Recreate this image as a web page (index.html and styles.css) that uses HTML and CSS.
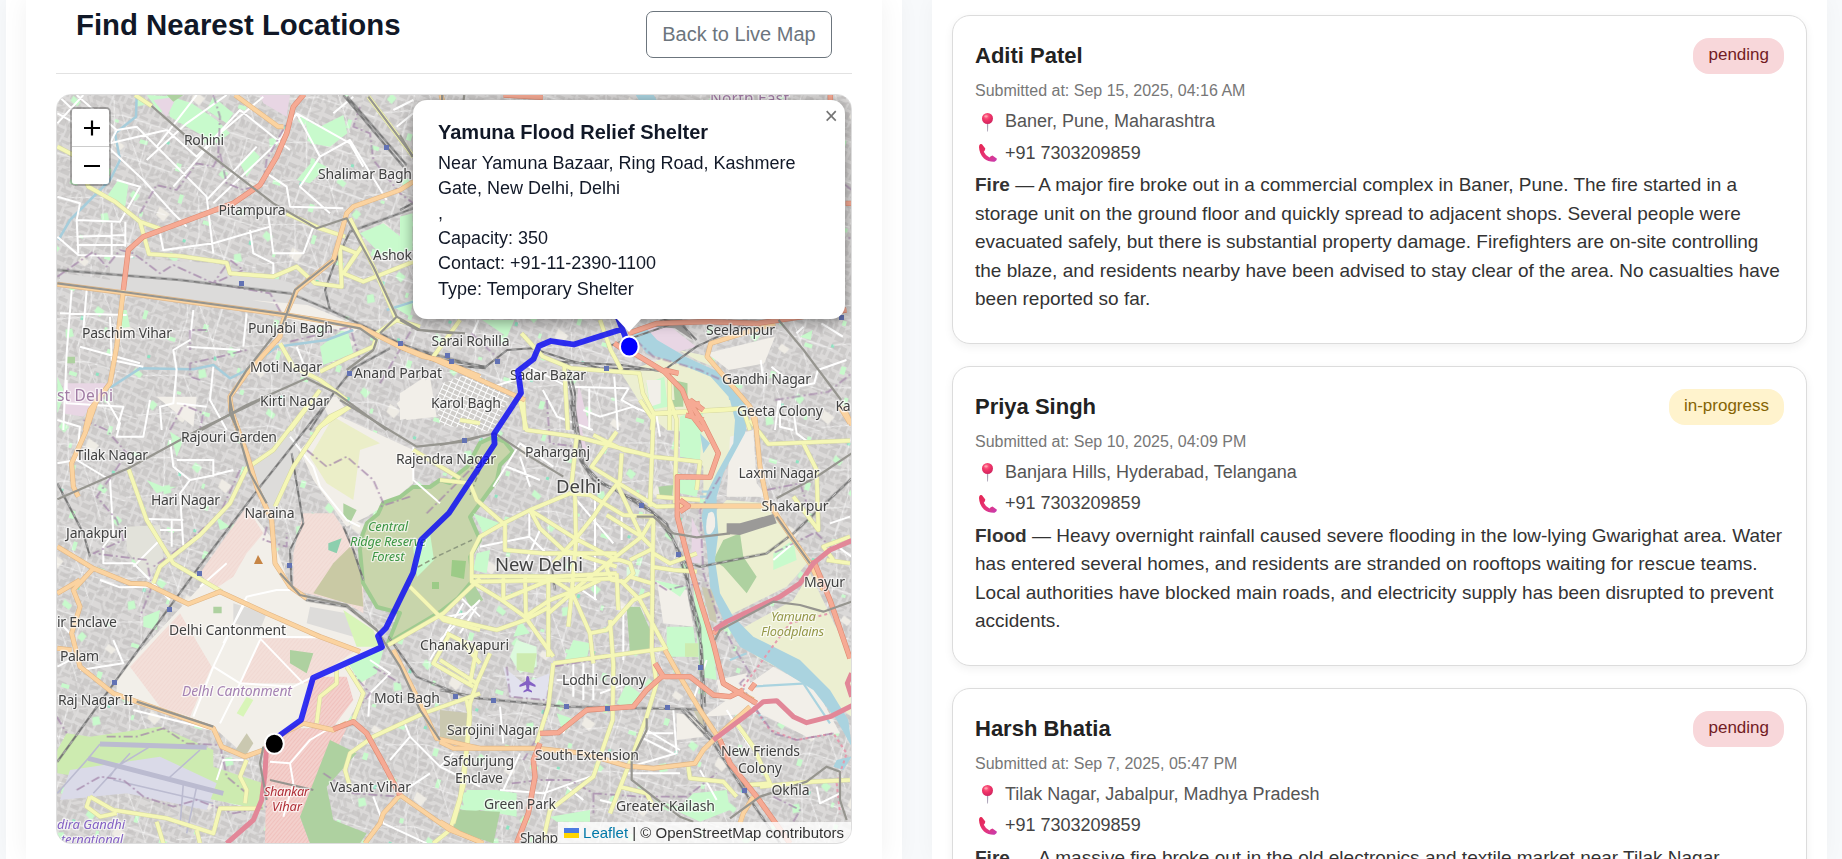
FILE: index.html
```html
<!DOCTYPE html>
<html lang="en">
<head>
<meta charset="utf-8">
<title>Find Nearest Locations</title>
<link rel="stylesheet" href="styles.css">
</head>
<body>
<div class="page">
<section class="panel map-panel">
<div class="map-card">
<header class="map-head"><h2>Find Nearest Locations</h2><button class="back">Back to Live Map</button></header>
<div class="map">
<svg class="tiles" viewBox="57 95 794 748" width="794" height="748">
<defs>
<pattern id="blocks" width="31" height="27" patternUnits="userSpaceOnUse" patternTransform="rotate(24)">
<path fill="#c6c5c4" d="M1 2h8v5h-8zM11 1h6v7h-6zM20 3h9v4h-9zM2 10h5v7h-5zM9 11h10v4h-10zM21 10h4v8h-4zM27 10h3v6h-3zM1 20h9v5h-9zM12 18h6v7h-6zM20 21h9v3h-9z"/>
<path stroke="#e6e6e6" stroke-width=".6" fill="none" d="M0 9H31M19.500 0V27"/>
</pattern>
<pattern id="blocks2" width="43" height="37" patternUnits="userSpaceOnUse" patternTransform="rotate(-13)">
<path fill="#b9b8b6" opacity=".5" d="M3 3h12v2h-12zM3 7h9v3h-9zM20 2h2v12h-2zM25 4h3v9h-3zM32 6h8v2h-8zM5 16h2v13h-2zM10 18h3v8h-3zM18 19h15v2h-15zM18 24h11v3h-11zM36 18h3v14h-3zM16 31h14v2h-14z"/>
</pattern>
<pattern id="lanes" width="97" height="83" patternUnits="userSpaceOnUse" patternTransform="rotate(8)">
<path stroke="#fff" stroke-width="1" fill="none" opacity=".6" d="M0 20L40 14L97 24M30 0L36 40L28 83M70 20L64 60L74 83M0 60L36 52L97 64M40 14L64 60"/>
</pattern>
<pattern id="parks" width="139" height="121" patternUnits="userSpaceOnUse" patternTransform="rotate(17)">
<path fill="#c8facc" d="M12 8h5v7h-5zM44 22l8 3-3 7-7-4zM90 12h4v9h-4zM120 30h8v4h-8zM20 54l6-3 4 7-7 4zM66 60h4v5h-4zM98 70l9 4-2 5-8-3zM36 92h8v4h-8zM78 104h5v8h-5zM124 96l6 3-3 7-6-3zM57 40h3v5h-3zM6 80h4v3h-4z"/>
<path fill="#8fe3c2" d="M31 36h3v4h-3zM106 54h3v3h-3zM62 86h3v3h-3z"/><path fill="#efece5" d="M74 30l12 4-4 9-9-4zM14 100l9 3-3 6-8-3z"/>
</pattern>
<pattern id="stripes" width="9" height="9" patternUnits="userSpaceOnUse" patternTransform="rotate(40)"><path fill="#f3dfd9" d="M0 0h9v9H0z"/><path fill="#efcfc9" d="M0 0h1v9H0z"/></pattern>
<pattern id="stripes2" width="9" height="9" patternUnits="userSpaceOnUse" patternTransform="rotate(40)"><path fill="#f3d0cc" d="M0 0h9v9H0z"/><path fill="#edb2ae" d="M0 0h1.500v9H0z"/></pattern>
<pattern id="bazar" width="6" height="5" patternUnits="userSpaceOnUse" patternTransform="rotate(25)"><path fill="#cfcdca" d="M0 0h6v5H0z"/><path stroke="#fff" stroke-width="2" d="M0 0H6M0 0V5"/></pattern>
<g id="yellow">
<g transform="scale(.33333)"><path d="M172 440L230 470L265 560L345 605L420 665L490 690M420 665L447 762L540 768L680 788L690 820L820 830L890 800L945 850L1025 860L1020 740L1070 760L1030 820L1090 845L1240 785M1085 740L1030 820M405 285L455 318M860 640L960 685L1035 710M840 1030L880 1100L960 1140L1040 1200M960 1115L1040 1075L1120 1040L1130 1010M1050 655L1120 800L1190 960L1130 1000M1190 960L1260 980M870 1290L960 1170M950 1290L990 1250L1050 1220M1105 290L1240 470M1300 1070L1380 960"/></g>
<g transform="translate(400) scale(.35714 .33333)"><path d="M340 1000L400 1070L480 1105L670 1120L680 1180L710 1240L960 1225M755 1130V1290M460 1100L470 1290M345 1200L350 1290M560 960L590 1050L620 1110M710 1240L705 1290M960 1225L980 1290"/></g>
<g transform="translate(0 400) scale(.33333)"><path d="M385 205L440 360L520 490L640 560L665 575M460 550L480 500L600 405L690 310L740 205L820 150L920 20M825 320L880 200L960 80L1050 20M1240 150L1380 235M1380 60L1440 70M1230 560L1330 660L1440 690M1440 535L1330 640L1165 735M1010 810L1010 850L960 890L950 970M1040 800L1090 880L1060 960M1440 880L1270 940L1120 1010L1050 1060L1035 1110L1050 1160M1400 900L1410 950L1390 1160L1350 1290L1300 1330M270 1190L340 1230L500 1255L640 1300L660 1225L780 1225M270 1190L260 1220L300 1250L350 1240M470 1265L490 1330M740 1080L720 1130L740 1170L735 1210M590 1290L600 1330M1350 700L1300 790L1420 860M1380 720L1440 790"/></g>
<g transform="translate(440 400) scale(.33333)"><path d="M600 0L640 60L630 320M690 0L710 60L705 310M640 42L880 28M240 0L260 90L410 110L640 170L780 185L770 270M460 105L550 150L600 160M530 95L455 200L650 320L705 318M545 160L540 240L490 305M930 60L985 132L1230 122M1090 130L1130 210L1135 390L1060 290M1230 410L1150 440L1180 480M0 240L90 250L110 300L190 370M410 110L395 250L405 290M190 370L270 330L390 280L450 285L550 345L640 350M190 370L120 410L95 460V545L185 600L255 650L340 770M95 528L340 530L530 520M195 370V450L310 460L530 460M405 290L408 420L395 580L385 680M270 330L405 415L530 480M530 250L605 410L635 440M640 350L605 410L500 345M640 350L635 750M340 490L400 425L460 350L490 305M270 330L300 385L370 450L530 500M255 650L330 600L395 575L540 460L605 410M95 545L400 540L530 535M255 530L258 650M190 600V530M185 600L330 540M395 575L325 530L325 770M395 575L450 700L500 690L580 600L630 580M330 620L255 660L170 690L0 650M540 540L600 600L680 750M570 530L635 550M570 480L640 445M530 520L535 630M325 640L395 580L480 540M450 700L460 790M340 790L680 745M510 660L520 790L518 960L460 1130L330 1230L310 1320M635 750L650 850L620 950L580 1060L510 1240M340 790L325 920L290 1030M0 780L110 850L150 760M110 850L90 910L80 1040L60 1200L40 1270M20 700L110 745L90 850M650 290L780 300M635 500L700 510L770 515M640 460L690 490L770 460M890 970L940 1040L990 1150L915 1155M745 1100L750 1135L850 1145L890 1190M540 1160L620 1180L640 1220M960 1160L1120 1145L1230 1140M1160 480L1230 490"/><path d="M540 480L570 490L580 520L555 545L515 540L500 505L515 480Z"/></g>
</g>
<g id="orange">
<g transform="scale(.33333)"><path d="M705 285L835 380L850 380M1240 545L1200 570L1060 620L1040 640L1000 780L890 870L850 960L840 1010L740 1120L690 1190L692 1230L715 1292M370 870L350 1040L330 1150L270 1230L255 1292M172 853L370 878L600 910L860 945L1080 980L1200 1040L1270 1070L1320 1080L1440 1130"/></g>
<g transform="translate(400) scale(.35714 .33333)"><path d="M0 1040L100 1080L350 1200M1050 970L870 1030L860 1070L900 1120L980 1220L1000 1292M1240 1220L1265 1275M115 285L120 305"/></g>
<g transform="translate(0 400) scale(.33333)"><path d="M290 0L255 100L215 190L220 260L235 290M690 0L700 50L740 160L770 260L815 360L825 490L870 560L920 595M172 440L280 505L390 550L440 552L565 612L660 575L800 640L960 710L1080 755M280 505L220 570L240 620L215 700L240 800L340 880L410 905L640 985L665 1040L735 1070L790 1050L830 1010L910 970L1000 990L1040 970M172 580L240 540M172 745L215 750M1180 750L1260 910L1310 1015L1440 1045M1200 1185L1150 1240L1140 1270L1095 1330M1200 1185L1350 1290L1440 1325"/></g>
<g transform="translate(440 400) scale(.33333)"><path d="M945 50L960 200L980 300L1040 390L1110 490L1150 570M720 318L970 318M0 1025L40 1045L290 1045L430 1060L500 1080L560 1098L640 1105L765 1090L790 1050L830 1010L930 920M675 750L720 830L780 930L840 1020M850 850L940 900M0 1265L60 1300L130 1330M940 1190L910 1240L900 1270M1230 70L1200 20"/></g>
</g>
<g id="salmon">
<g transform="scale(.33333)"><path d="M912 283L880 320L860 400L830 470L780 555L700 610L430 710L385 750L370 870"/></g>
<g transform="translate(400) scale(.35714 .33333)"><path d="M290 285L400 292M640 1050L740 1115L790 1170L820 1250L850 1292M640 1000L720 970L860 965L1000 970L1250 930M1248 610H1265M1205 285V300M640 1060L600 1030M740 1110L780 1120M810 1220L840 1210M800 1245L850 1260"/></g>
<g transform="translate(0 400) scale(.33333)"><path d="M1000 988L1060 965L1100 1000L1150 1090L1200 1185"/></g>
<g transform="translate(440 400) scale(.33333)"><path d="M745 0L790 70L835 160L810 232L712 230L712 350L740 460L780 600L820 730L850 850L950 910M300 1000L355 998L440 930L580 920L620 870L665 830L750 830L820 885L870 890L910 870M720 300L745 318L720 335M300 1030L280 1080L285 1130L265 1240L230 1330M840 1020L870 1090L950 1190L1050 1330M1120 480L1170 600L1230 775M820 700L860 670M930 870L945 850M645 790L670 830M750 0L790 30"/></g>
</g>
<g id="pink">
<g transform="translate(0 400) scale(.33333)"><path d="M800 1030L795 1120L785 1200L760 1260L680 1330"/></g>
<g transform="translate(440 400) scale(.33333)"><path d="M822 690L860 665L1020 590L1080 550L1120 490L1170 450L1235 422M820 1020L940 930L970 905L1010 902L1060 950L1100 968L1170 950L1240 915M1235 820L1222 850L1235 890"/></g>
</g>
<g id="metro">
<g transform="scale(.33333)"><path d="M455 318L560 410L820 610L950 685L1040 655L1120 800L1190 950L1260 990L1395 1000M1190 950L1140 1000M1000 780L885 870L850 970L740 1110L690 1190L690 1240L715 1292M172 850L370 876L860 943L1080 985L1130 1020L1120 1050L1040 1110M605 1290L740 1215L920 1135L1010 1180L1160 1290M1105 290L1240 470"/></g>
<g transform="translate(400) scale(.35714 .33333)"><path d="M1060 960L1130 1050L1235 1200M0 960L50 990L150 1000M0 405L35 470M180 285L178 300M118 285V300"/></g>
<g transform="translate(0 400) scale(.33333)"><path d="M690 0L700 50L750 220L800 310M172 298L385 205L605 85L740 20L780 0M1020 0L1250 140L1390 125L1440 110M840 520L900 585L1040 615L1130 690L1200 800L1260 930L1320 1020M410 905L640 980M790 1040L780 1090L800 1200M810 1140L940 1170"/></g>
<g transform="translate(440 400) scale(.33333)"><path d="M0 135L165 100L270 170L370 230M590 350L640 350L700 400L770 412L870 400M1235 160L1130 230L1010 295M1010 350L1110 490M620 955L620 990L575 1080L575 1140L640 1190L720 1250L760 1265M825 720L840 690L1000 605L1080 615L1150 635L1235 605M870 1255L960 1190L1100 1145L1160 1100L1200 1115L1200 1200L1220 1260"/></g>
</g>
<g id="rail">
<g transform="scale(.33333)"><path d="M172 810L540 840L870 880L990 930L1140 1000L1220 1040L1440 1100M1030 285L1210 500M1042 290L1220 495M1240 625L1050 695L1000 800L975 870L990 930M1170 1045L1060 1105L1000 1180L930 1290"/></g>
<g transform="translate(400) scale(.35714 .33333)"><path d="M0 1030L120 1080L240 1100L300 1050L370 1045L470 1080L560 1105L740 1110L830 1040L970 970L1060 960M0 1045L130 1095L240 1105M440 1085L620 1095L740 1115M460 1090L480 1180L490 1290M470 1090L490 1180L485 1290M580 1040L780 965L830 1020M640 1000L740 960L780 970M0 630L35 610"/></g>
<g transform="translate(0 400) scale(.33333)"><path d="M970 20L780 260L590 510L345 845L172 1085M875 160L910 370L870 450L875 560L920 600L1040 620L1130 690M1090 540L1060 450L1030 380M172 250L250 400L270 470M1165 710L1250 830L1370 880L1440 895"/></g>
<g transform="translate(440 400) scale(.33333)"><path d="M390 0L420 180L460 240L600 305L680 370L715 460L740 540L780 680L785 920L800 1000M400 0L430 190L475 240L640 340L700 420L740 500L750 600L785 740L795 920M720 480L780 500L980 460L1060 400L1235 235M0 870L120 895L380 920L790 928M725 930L820 1030L910 1170L1020 1330M735 925L830 1025L920 1170M345 570L335 500"/></g>
</g>
</defs>
<path fill="#dddcdb" d="M57 95H851V843H57z"/><path fill="url(#blocks)" d="M57 95H851V843H57z"/><path fill="url(#blocks2)" d="M57 95H851V843H57z"/><path class="haze" d="M57 95H851V843H57z"/><path fill="url(#parks)" d="M57 95H851V843H57z"/><path fill="url(#lanes)" d="M57 95H851V843H57z"/>
<g transform="scale(.33333)">
<path fill="#c8facc" d="M500 285L575 310L650 360L690 400L650 430L560 380L510 350ZM640 290L700 340L680 370L620 330ZM915 360L960 380L1030 345L1042 400L990 440L930 430ZM320 590L355 540L385 555L375 625ZM440 285L530 290L480 340ZM720 490L760 450L780 470L740 530ZM890 540L940 480L980 500L930 550ZM1080 700L1150 670L1240 740L1150 770ZM960 1040L1040 980L1060 1060L970 1095ZM172 1130L195 1180L172 1240ZM360 930L380 930L390 980L360 985ZM1240 900L1180 920L1230 950Z"/>
<path fill="#e8d6e4" d="M780 285H870L860 350L790 310ZM460 300L530 290L500 350ZM190 1150H320L250 1250L190 1240ZM580 830L700 830L640 880Z"/>
<path fill="#f2efe9" d="M440 840L860 890L960 930L1080 980L1060 1000L700 920L450 890ZM1190 1210L1290 1130L1310 1250L1220 1260ZM960 1190L1010 1190L1040 1230L990 1260ZM470 1190L590 1190L580 1280Z"/>
<path fill="#dcdbda" d="M330 770L640 790L880 850L980 920L640 890L330 850ZM180 818L820 910L850 940L180 855Z"/><path fill="#aed1a0" d="M500 285H550L520 305ZM200 1070h25v20h-25Z"/>
</g>
<g transform="translate(400) scale(.35714 .33333)">
<path fill="#ecefd1" d="M620 1120L780 1060L860 1100L930 1180L940 1292H750L690 1240ZM780 1050L870 1070L900 1110L830 1080Z"/>
<path fill="#c8facc" d="M690 1150L740 1130L750 1220L700 1230ZM1120 1010L1155 990L1150 1020ZM230 960L320 960L300 1010ZM770 1270L820 1250V1292H770ZM0 650L35 640V750L0 760Z"/><path fill="#aed1a0" d="M765 1140L805 1150V1220H770Z"/>
<path fill="#f2efe9" d="M690 1140H730V1210L700 1220ZM860 1060L1050 1010L1020 1090L920 1110ZM0 1180L70 1130L90 1240L0 1260Z"/><path fill="#e8d6e4" d="M660 985L740 965L830 1040L760 1060ZM500 1150L530 1280H490Z"/><path fill="#9b9a98" d="M700 980L740 958H790L820 1020L770 985Z"/>
<path class="water" d="M640 985L690 1060L790 1095L870 1130L920 1190L935 1292H970L955 1200L900 1120L800 1070L720 1020L690 985ZM660 285H710L720 302H670Z"/>
</g>
<g transform="translate(0 400) scale(.33333)">
<path fill="#f2efe9" d="M1000 40L1240 150L1240 250L1180 300L1100 350L1040 380L940 240L900 150ZM740 320L820 420L870 560L920 600L1040 620L1140 700L1080 900L1040 970L880 990L740 1070L650 990L350 880L350 830L600 560ZM750 830H930L900 980H760Z"/>
<path fill="#ebeec8" d="M1000 50L1140 130L1080 150L1060 300L980 250L930 170Z"/>
<path fill="#dddcda" d="M740 200L880 90L900 180L820 330L760 250ZM930 620L1040 640L1060 710L920 670ZM700 610L800 640L780 690L700 670Z"/>
<path fill="url(#stripes)" d="M390 800L540 640L635 800L570 950L480 920ZM600 520L740 320L790 400L740 460L700 530L640 570ZM910 340L1000 340L1060 430L1090 560L1090 640L1040 610L880 570L880 460ZM720 850L780 715L950 715L1070 750L920 850Z"/>
<path fill="url(#stripes2)" d="M870 985L1040 985L980 1110L900 1250L930 1330H795L800 1060ZM930 830L1040 830L1060 900L1000 980L910 970Z"/>
<path fill="#c9c9a4" d="M1050 440L1080 490L1090 620L1040 610L940 580L1000 490Z"/>
<path fill="#aed1a0" d="M1030 310L1070 330L1050 370L1030 350ZM870 750L940 760L920 820L870 790ZM990 1020L1070 1060L980 1160L1000 1260L1100 1300L1080 1330H930L900 1250ZM1370 1240L1440 1230V1290L1360 1290ZM640 620h25v20h-25Z"/>
<path fill="#8ccfae" d="M985 430L1025 415L1010 460L985 450ZM1120 470h6v30h-6Z"/><path fill="#c8facc" d="M1040 780L1150 750L1130 820L1080 850ZM430 650L480 630L470 690L430 680ZM510 95L550 120L530 170ZM650 350L690 380L660 390ZM440 240L490 260H530L470 280ZM1380 1180L1440 1170V1230L1400 1240Z"/><path fill="#d8f5b8" d="M1030 630L1120 690L1140 740L1070 740ZM740 890L760 900L730 950L710 940Z"/>
<path fill="#cdebb0" d="M200 1000L270 1010L480 980L640 1050L640 1100L790 1150V1230L500 1170L172 1120V1050Z"/>
<path fill="#dadae8" d="M210 1110L480 1070L650 1150L620 1230L380 1180L180 1200Z"/><path class="runway" d="M300 1032L620 1042M265 1075L670 1180"/><path class="taxiway" d="M172 1180L265 1075L300 1032M350 1100L330 1130M450 1040L350 1100M600 1050L500 1140M590 1160L560 1300M390 1060L280 1180M550 1150L540 1280M340 1140L640 1210"/>
<path fill="#e2e2da" d="M380 380L480 375L490 480L440 530L380 450Z"/><path fill="#cac8b0" d="M740 1000L760 1030L735 1070L700 1060Z"/>
</g>
<path class="ridge" d="M480 443L467 467L458 474L450 483L440 480L430 487L413 487L400 497L383 503L378 514L367 523L362 536L360 550L363 583L377 607L400 613L388 643L440 612L458 598L473 580L470 557L480 540L470 517L484 498L497 480L500 465L513 452L505 442L493 437Z"/>
<path fill="#9ccb87" d="M452 560L466 561L464 579L451 576ZM432 582h7v7h-7z"/><path fill="#c8facc" d="M413 547L430 533L434 560L417 577Z"/>
<path class="trail" d="M418 567L440 555L472 540M480 470L470 495"/>
<g transform="translate(440 400) scale(.33333)">
<path fill="#ecefd1" d="M710 0H880L900 100L840 240L790 300L790 200L720 100ZM830 330L860 300L980 310L1000 350L1110 480L1040 560L860 650L810 500ZM880 700L1060 600L1110 520L1235 780V950L1120 860L950 770Z"/>
<path fill="#f2efe9" d="M870 110L940 90L950 250L980 290L860 290ZM650 540L740 570L760 680L670 670ZM790 950L1000 800L1130 870L1200 1000L1100 1010L960 940ZM830 840L920 820L960 920L840 900ZM710 940L790 950V1010L710 1020Z"/>
<path fill="#c8facc" d="M720 50L790 20L780 180L720 170ZM720 240H780L770 290L720 280ZM640 540L740 560L720 590L690 570ZM760 560L820 740L830 840L780 830ZM680 680L760 680L770 770L680 770ZM100 340L180 370L130 400ZM110 460L150 450L140 520L100 510ZM1000 460L1060 420L1070 480L1000 510ZM560 850L600 880L570 930L530 910ZM240 660L270 700L220 710ZM400 720L450 730L440 780L370 790ZM170 1170L230 1180L230 1250L70 1220L80 1170ZM330 1250L450 1230L450 1265L350 1265ZM640 1200L720 1220L760 1180L860 1170L870 1230L780 1265ZM350 940L410 960L370 1000Z"/>
<path fill="#dcfadd" d="M230 720L290 740L290 800L240 820L210 770ZM560 500L600 510L590 540L560 530Z"/><path fill="#cdebb0" d="M735 730H775V770H735ZM230 760H290L280 820L230 810Z"/>
<path fill="#aed1a0" d="M560 620L600 620L635 700V750L570 760ZM850 420L900 400L910 470L950 530L920 580L850 500L820 480ZM70 580L100 550L130 600L90 620ZM60 1230L180 1235L160 1330L40 1290ZM655 260L700 255L695 295L660 290ZM690 0H730V20H700Z"/>
<path fill="#e8d6e4" d="M755 350L790 430L780 490L755 490ZM410 0L430 110L450 180L420 130Z"/><path fill="#cac8b0" d="M0 930L90 940L90 1030L0 1030ZM785 560L820 570L830 670L810 660ZM760 930L790 940V990Z"/><path fill="#e2e2ee" d="M190 800L250 850L330 820L320 900L210 890Z"/>
<path class="water" d="M870 0H925L915 100L850 220L830 290L830 340L835 400L825 480L840 580L880 650L940 710L1080 780L1170 870L1225 960L1235 1040L1190 960L1120 870L990 790L900 740L850 660L810 560L800 440L785 350L800 280L830 220L880 130L885 60ZM780 100L810 130L790 160ZM1190 1080L1235 1070L1210 1110L1180 1100Z"/>
<path class="creek" d="M930 860L1100 850M1090 850L1170 970M870 780L920 760M940 920L970 960M780 290h25M785 275h20"/><path fill="#f2efe9" d="M805 340Q828 320 825 380Q815 410 800 400Q795 370 805 340Z"/>
<path class="planned" d="M910 860L990 750L1050 670L1170 640M940 920L990 990L1070 1020L1180 1000L1220 1060L1190 1150L1200 1240"/>
<path fill="#9b9a98" d="M860 370L900 370L1000 342L1010 370L900 405L860 402Z"/>
</g>
<path fill="url(#bazar)" d="M443 383L475 371L510 396L492 432L440 425L436 400Z"/>
<g class="stream">
<g transform="scale(.33333)"><path d="M410 290L408 350L345 400L360 480L330 540L210 660L175 720M320 1170L420 1105L580 1108L640 1095L690 1135L740 1110L830 1040L980 1020L1060 990M1160 930L1240 905"/></g>
</g>
<g class="street">
<g transform="scale(.33333)"><path d="M172 370L250 285M172 340L280 400L430 540L520 640L560 680M230 285L350 390L330 430L500 390M350 390L410 380L470 440L620 590L640 760M470 440L590 285M440 480L560 370L680 285M500 390L590 470L720 330L870 450M520 560L660 400L790 290M620 600L770 440M640 610L830 430L890 340L1050 430L1090 500M890 340L960 470L900 560L990 640M960 470L1050 420L1160 600M800 520L860 560L870 620L1030 625M172 590L240 610L230 660L360 665L420 560L350 540M230 660L235 760M335 665V765M376 665V740M230 710L376 705M230 735H376M480 700L490 750L640 730L810 680L800 620M750 690L760 760L820 790V830M810 680L820 760L910 760L940 680M172 710L235 765L400 770M180 940L380 945M215 870L200 1060L190 1290M260 870L250 990M330 950L335 1080L430 1100M240 1040L420 1090M580 930L570 1020L520 1050L530 1110L520 1210L480 1220L485 1290M560 1040L720 1050M640 1100L630 1200L680 1290M740 940L730 1040M530 1210L620 1220M890 1040L910 1090M200 1140L200 1210L370 1220L350 1290M1060 290L1000 340M1180 330L1240 300M1240 340L1190 380M172 285L220 330"/></g>
<g transform="translate(400) scale(.35714 .33333)"><path d="M360 1100L470 1160L640 1165M400 1170L440 1250L540 1290M530 1160L530 1290M600 1130L610 1290M640 1165L620 1200L670 1230M1040 1100L1110 1160L1160 1150L1170 1110L1250 1080M1010 1080L1020 1160M1130 980L1110 1000M1180 970L1240 1010M200 1010L220 960M260 1160L380 1120M1060 1200L1050 1290"/></g>
<g transform="translate(0 400) scale(.33333)"><path d="M172 60L240 80L230 180L330 240L340 400L310 440V490L400 490M172 190L230 180M320 0L360 70L350 110L430 110L450 0M510 120L520 200L570 240L540 280L550 440M570 240L620 230L700 210M530 180L640 180V230M440 357L550 360M480 390H550M515 360V440M480 420L400 500M870 110L940 200L960 260L1040 360L1080 380M1240 140L1240 240L1320 310M580 950L640 800L740 590L830 570L870 570M640 800L720 850L880 860L960 820M720 850L660 970M780 715L910 850M770 710L960 712M720 850L780 720M670 730L740 600M400 490L510 600M172 660L210 700M172 800L210 780M240 810L370 790L340 720M400 930L640 990M650 1140L670 1080L730 1080M980 990L930 1020L870 1090L880 1150L850 1250M1110 780L1170 820L1110 880L1105 950M1210 960L1230 1010L1320 1100L1440 1160M1170 1080L1230 1010M1290 1120L1200 1180M1120 1190L1150 1270L1280 1330M1320 1100L1360 1060M600 560L680 490M300 540L360 562L450 560M810 1085L870 1090M1440 600L1320 720M1380 590L1440 650M1290 780L1390 610"/></g>
<g transform="translate(440 400) scale(.33333)"><path d="M160 260L240 130L340 200M240 170L270 260M200 200L300 240M430 30L480 50L580 20M580 20L650 50L660 110M268 330V410L330 470M268 410L120 440M410 300L520 430M545 345V420M330 470L325 530M365 530L470 600M465 290V600M550 640V780M20 650L80 640M110 620L60 700M400 790V890M430 790V900M460 790V900M350 840H450M480 880L560 850M180 920L190 1030M370 1000L380 970M600 1010L700 1060M620 990L720 1050M700 930L710 1060L570 1100M610 1000L700 1000M560 1120L720 1120M240 1060L190 1170M330 1140L300 1230M380 1160L430 1200M180 1170L310 1180L450 1130M480 1200L560 1220M780 1110L830 1200M1170 370L1230 350M1060 30L1070 100L1110 130M1020 0V80L1060 90M1180 430L1235 470M1060 430L1000 480M1130 1160L1140 1210L1200 1180M860 930L930 1040M300 390L260 480M800 780L760 900"/></g>
</g>
<g class="border">
<g transform="scale(.33333)"><path d="M172 830L280 755L320 800L360 750L400 760L480 820L520 795L640 850L690 780L730 810L640 850L810 880L850 950M420 640L470 555L530 570L590 490L640 500L660 460L680 550L730 570L790 550L800 480L860 370M640 285L660 350L655 460M1080 320L1060 380L1110 400L1120 480L1200 580L1240 610M600 1140L570 1130L570 1090L660 1070L740 1050M870 1025L1050 980L1080 1080M1140 1150L1240 980M510 1290L550 1215L610 1240L600 1290M620 990L570 990V1050"/></g>
<g transform="translate(400) scale(.35714 .33333)"><path d="M780 310L860 500L1110 700L1265 715M1000 400L1180 500L1265 570M660 1020L710 1070L840 1110L900 1140M1050 1200L1200 1175L1265 1120M200 1000L280 1080"/></g>
<g transform="translate(0 400) scale(.33333)"><path d="M250 60L320 90L380 160L340 220L290 290L350 360L370 420L280 460L440 480L455 560L420 650M720 210L660 340L560 430L460 500M920 150L980 200L1040 170L1120 240L1150 310M800 380L790 420L860 440V400M1230 290L1140 320M1280 340L1440 180M1040 800L1110 880L1070 930M320 1010L410 1010L490 985L560 1030L660 1035L680 1130L740 1180M230 1170L300 1130L370 1140L430 1190L520 1220L590 1200L700 1240L800 1220M1120 800L1200 850M170 950L200 1000M970 1120L1060 1180L1200 1190"/></g>
<g transform="translate(440 400) scale(.33333)"><path d="M840 230L780 330L790 520L830 640L880 740L930 820L900 850L950 930L1000 1000L1070 1020L1180 1000M640 360V750L340 800L300 1000L250 1080M320 0L330 130L410 140M780 550L720 560L680 570L640 545M980 270L1080 250L1130 400L1180 450M1120 400L1000 460M200 800L210 890L320 900M215 1150L300 1140L390 1140L460 1180L600 1190L740 1190L830 1120M460 1180V1240M1000 1190L1080 1230L1060 1265"/></g>
</g>
<use href="#rail" class="rail-base"/><use href="#rail" class="rail-dash"/>
<use href="#yellow" class="yellow-case"/><use href="#yellow" class="yellow"/>
<use href="#orange" class="orange-case"/><use href="#orange" class="orange"/>
<use href="#salmon" class="salmon-case"/><use href="#salmon" class="salmon"/>
<use href="#pink" class="pink"/><use href="#metro" class="metro"/>
<path fill="#6272b4" d="M384 145h5v5h-5zM239 281h5v5h-5zM398 341h5v5h-5zM445 353h5v5h-5zM449 359h5v5h-5zM347 371h5v5h-5zM495 359h5v5h-5zM604 366h5v5h-5zM839 315h5v5h-5zM197 571h5v5h-5zM167 607h5v5h-5zM112 680h5v5h-5zM287 563h5v5h-5zM462 438h5v5h-5zM639 503h5v5h-5zM676 552h5v5h-5zM698 665h5v5h-5zM453 694h5v5h-5zM491 698h5v5h-5zM564 704h5v5h-5zM605 706h5v5h-5zM665 705h5v5h-5zM742 788h5v5h-5z"/>
<path fill="#c78545" d="M258 555L263 564H254z"/>
<path fill="#8461c4" d="M527.500 676Q529.500 676 529.500 681L535.500 685V687L529.500 685L529 689L532 691V692.500L527.500 691L523.500 692.500V691L526.500 689L526 685L519.500 687V685L526 681Q526 676 527.500 676Z"/>
<g class="label">
<text x="184" y="144.700" textLength="40">Rohini</text><text x="318" y="179" textLength="94">Shalimar Bagh</text><text x="218.500" y="215" textLength="67">Pitampura</text><text x="373" y="260" textLength="39">Ashok</text><text x="248" y="332.500" textLength="85">Punjabi Bagh</text><text x="82" y="338.300" textLength="90">Paschim Vihar</text><text x="431.500" y="346" textLength="78">Sarai Rohilla</text><text x="250" y="371.500" textLength="72">Moti Nagar</text><text x="354" y="377.500" textLength="88">Anand Parbat</text><text x="260" y="406" textLength="69">Kirti Nagar</text><text x="431" y="407.500" textLength="70">Karol Bagh</text><text x="510" y="379.500" textLength="76">Sadar Bazar</text><text x="706" y="334.500" textLength="69">Seelampur</text><text x="722" y="384" textLength="89">Gandhi Nagar</text><text x="737" y="415.500" textLength="86">Geeta Colony</text><text x="835.500" y="411" textLength="15">Ka</text>
<text x="181" y="441.500" textLength="96">Rajouri Garden</text><text x="76" y="459.700" textLength="72">Tilak Nagar</text><text x="151" y="504.500" textLength="69">Hari Nagar</text><text x="244.500" y="517.500" textLength="50">Naraina</text><text x="66" y="537.500" textLength="61">Janakpuri</text><text x="57" y="627" textLength="60">ir Enclave</text><text x="169" y="635" textLength="117">Delhi Cantonment</text><text x="60" y="661" textLength="39">Palam</text><text x="58" y="704.500" textLength="75">Raj Nagar II</text><text x="374" y="702.500" textLength="66">Moti Bagh</text><text x="396" y="464" textLength="100">Rajendra Nagar</text><text x="525" y="457" textLength="65">Paharganj</text><text x="420" y="650" textLength="89">Chanakyapuri</text><text x="330" y="792" textLength="81">Vasant Vihar</text>
<text x="738.500" y="478" textLength="81">Laxmi Nagar</text><text x="761.500" y="511" textLength="67">Shakarpur</text><text x="804" y="587" textLength="41">Mayur</text><text x="562" y="685" textLength="84">Lodhi Colony</text><text x="447" y="735" textLength="91">Sarojini Nagar</text><text x="443" y="765.500" textLength="71">Safdurjung</text><text x="455" y="783" textLength="48">Enclave</text><text x="535" y="760" textLength="104">South Extension</text><text x="721" y="755.500" textLength="79">New Friends</text><text x="738" y="773" textLength="44">Colony</text><text x="771.500" y="795" textLength="38">Okhla</text><text x="484" y="808.500" textLength="72">Green Park</text><text x="616" y="811" textLength="99">Greater Kailash</text><text x="520" y="842.500" textLength="38">Shahp</text>
</g>
<g class="label city"><text x="556" y="492.500" textLength="45">Delhi</text><text x="495" y="570.500" textLength="88">New Delhi</text></g>
<g class="label district"><text x="57" y="401" textLength="56">st Delhi</text><text x="710" y="103.500" textLength="79">North East</text></g>
<g class="label mauve"><text x="182" y="696" textLength="110">Delhi Cantonment</text></g>
<g class="label airport"><text x="57" y="829" textLength="68">dira Gandhi</text><text x="61" y="844" textLength="62">ternational</text></g>
<g class="label forest"><text x="368" y="531" textLength="40">Central</text><text x="350" y="546" textLength="76">Ridge Reserve</text><text x="371.500" y="561" textLength="33">Forest</text></g>
<g class="label military"><text x="264" y="796" textLength="45">Shankar</text><text x="272" y="811" textLength="30">Vihar</text></g>
<g class="label flood"><text x="771" y="621" textLength="45">Yamuna</text><text x="761" y="636" textLength="63">Floodplains</text></g>
<path class="route" d="M627 341L618 318M621 329.500L573.900 344.500L550.700 341L539 346L533.500 359L518 371L521 393L494 434L494.600 444L449 513L421 540L413 573L386 628L378 636L382 647L313 678L301 720L276 738"/>
<ellipse class="pin" cx="629.300" cy="346.500" rx="9.300" ry="10" fill="#00f"/><ellipse class="pin" cx="274.300" cy="743.800" rx="9.500" ry="10" fill="#000"/>
</svg>
<div class="zoom"><button><svg width="18" height="18" viewBox="0 0 18 18"><path d="M9 1.500V16.500M1 9H17"/></svg></button><button><svg width="18" height="18" viewBox="0 0 18 18"><path d="M1 9H17"/></svg></button></div>
<div class="popup"><span class="close">×</span><b>Yamuna Flood Relief Shelter</b><p>Near Yamuna Bazaar, Ring Road, Kashmere<br>Gate, New Delhi, Delhi<br>,<br>Capacity: 350<br>Contact: +91-11-2390-1100<br>Type: Temporary Shelter</p></div>
<div class="attribution"><svg width="15" height="10" viewBox="0 0 15 10"><path fill="#4c7be1" d="M0 0h15v5H0z"/><path fill="#ffd500" d="M0 5h15v5H0z"/></svg><span><a>Leaflet</a> | © OpenStreetMap contributors</span></div>
</div>
</div>
</section>
<section class="panel reports">
<svg width="0" height="0" class="symbols"><defs>
<linearGradient id="pg" x1="0" y1="0" x2="1" y2="1"><stop offset="0" stop-color="#e5244f"/><stop offset=".55" stop-color="#e63579"/><stop offset="1" stop-color="#c33bb5"/></linearGradient>
<radialGradient id="rg" cx=".4" cy=".3" r=".7"><stop offset="0" stop-color="#ff7590"/><stop offset=".5" stop-color="#f23468"/><stop offset="1" stop-color="#cf2560"/></radialGradient>
<symbol id="place" viewBox="0 0 20 20"><path d="M9.800 10H11.300L11 19.500H10.200Z" fill="#a9a0b5"/><circle cx="10.500" cy="6.500" r="5.500" fill="url(#rg)"/><ellipse cx="9" cy="4.400" rx="1.700" ry="1.100" fill="#ff9fae"/></symbol>
<symbol id="phone" viewBox="0 0 20 20"><path fill="url(#pg)" d="M3.500 1Q2 1.500 2 4Q2.300 11 7 15.500Q11.500 19 17.500 18.700Q19.700 18 20 15.800L15.500 12.500Q13.500 13 12.500 14.500Q8.500 12.500 6.800 8.700Q8.300 7.500 8.300 5.500L5 1.300Q4.300.7 3.500 1Z"/></symbol>
</defs></svg>
<article class="card"><header><h3>Aditi Patel</h3><span class="badge pending">pending</span></header><div class="time">Submitted at: Sep 15, 2025, 04:16 AM</div><div class="row place"><svg><use href="#place"/></svg>Baner, Pune, Maharashtra</div><div class="row"><svg><use href="#phone"/></svg>+91 7303209859</div><p><b>Fire</b> — A major fire broke out in a commercial complex in Baner, Pune. The fire started in a<br>storage unit on the ground floor and quickly spread to adjacent shops. Several people were<br>evacuated safely, but there is substantial property damage. Firefighters are on-site controlling<br>the blaze, and residents nearby have been advised to stay clear of the area. No casualties have<br>been reported so far.</p></article>
<article class="card"><header><h3>Priya Singh</h3><span class="badge progress">in-progress</span></header><div class="time">Submitted at: Sep 10, 2025, 04:09 PM</div><div class="row place"><svg><use href="#place"/></svg>Banjara Hills, Hyderabad, Telangana</div><div class="row"><svg><use href="#phone"/></svg>+91 7303209859</div><p><b>Flood</b> — Heavy overnight rainfall caused severe flooding in the low-lying Gwarighat area. Water<br>has entered several homes, and residents are stranded on rooftops waiting for rescue teams.<br>Local authorities have blocked main roads, and electricity supply has been disrupted to prevent<br>accidents.</p></article>
<article class="card"><header><h3>Harsh Bhatia</h3><span class="badge pending">pending</span></header><div class="time">Submitted at: Sep 7, 2025, 05:47 PM</div><div class="row place"><svg><use href="#place"/></svg>Tilak Nagar, Jabalpur, Madhya Pradesh</div><div class="row"><svg><use href="#phone"/></svg>+91 7303209859</div><p><b>Fire</b> — A massive fire broke out in the old electronics and textile market near Tilak Nagar,</p></article>
</section>
</div>
</body>
</html>
```
FILE: styles.css
```css
* { box-sizing: border-box; }
body { margin: 0; height: 859px; overflow: hidden; background: #f7f9fb; font-family: "Liberation Sans", Arial, sans-serif; color: #111827; }
h2, h3, p { margin: 0; }
button { font-family: inherit; padding: 0; }
.page { display: grid; grid-template-columns: 896px 895px; column-gap: 30px; padding-left: 6px; height: 859px; overflow: hidden; }
.panel { background: #fff; height: 859px; box-shadow: 0 0 20px rgba(0,0,0,.035); overflow: hidden; }
.map-panel { padding: 0 20px; }
.map-card { height: 859px; padding: 0 30px; background: #fff; box-shadow: 0 0 24px rgba(0,0,0,.06); }
.map-head { display: flex; justify-content: space-between; align-items: flex-start; height: 74px; padding: 0 20px; border-bottom: 1px solid #e2e2e2; }
.map-head h2 { font-size: 29.350px; line-height: 34px; padding-top: 8px; }
.back { margin-top: 11px; width: 186px; height: 47px; border: 1px solid #6c757d; border-radius: 7px; background: #fff; color: #6c757d; font-size: 20px; }
.map { position: relative; height: 750px; margin-top: 20px; border: 1px solid #ddd; border-radius: 15px; overflow: hidden; }
.tiles { display: block; }
.tiles path { vector-effect: non-scaling-stroke; stroke-linejoin: round; }
.tiles pattern path { vector-effect: none; }
.haze { fill: #d6d5d4; opacity: .35; }
.water { fill: #aad3df; }
.ridge { fill: #c8d5ab; stroke: #9fcb90; stroke-width: 4px; }
.trail { fill: none; stroke: #8f9a80; stroke-width: 1.5px; stroke-dasharray: 5 3; }
.runway { fill: none; stroke: #bbbbd0; stroke-width: 5px; }
.taxiway { fill: none; stroke: #bbbbd0; stroke-width: 1.6px; }
.creek { fill: none; stroke: #aad3df; stroke-width: 2.2px; }
.planned { fill: none; stroke: #e59bae; stroke-width: 2px; stroke-dasharray: 3 3; }
.stream, .street, .border { fill: none; }
.stream { stroke: #a6cddb; stroke-width: 2.5px; }
.street { stroke: #fff; stroke-width: 2px; }
.border { stroke: #a486aa; stroke-width: 1.8px; stroke-dasharray: 9 3 2 3; opacity: .75; }
#yellow, #orange, #salmon, #pink, #metro, #rail { fill: none; }
.rail-base { stroke: #747474; stroke-width: 2px; }
.rail-dash { stroke: #c4c4c4; stroke-width: 1px; stroke-dasharray: 5 6; }
.yellow-case { stroke: #d5d7a3; stroke-width: 4.6px; }
.yellow { stroke: #f5f7b6; stroke-width: 3.6px; }
.orange-case { stroke: #e0b584; stroke-width: 5px; }
.orange { stroke: #fbd3a0; stroke-width: 3.9px; }
.salmon-case { stroke: #dd8a72; stroke-width: 5.4px; }
.salmon { stroke: #f6aa94; stroke-width: 4.2px; }
.pink { stroke: #e28798; stroke-width: 5px; }
.metro { stroke: #96958f; stroke-width: 2.2px; }
.label { font: 14px "Noto Sans", sans-serif; fill: #424242; stroke: rgba(255,255,255,.65); stroke-width: 2.6px; paint-order: stroke; stroke-linejoin: round; }
.city { font-size: 18.500px; }
.district { font-size: 15.500px; fill: #a17ca4; }
.mauve { font-style: italic; fill: #a583b3; }
.airport { font-size: 13px; font-style: italic; fill: #8461c4; }
.forest { font-size: 13px; font-style: italic; fill: #3d9645; }
.military { font-size: 13px; font-style: italic; fill: #b03038; }
.flood { font-size: 13px; font-style: italic; fill: #95984a; }
.route { fill: none; stroke: #0c0cf4; stroke-width: 5.800px; stroke-linecap: round; opacity: .84; }
.pin { stroke: #fff; stroke-width: 2px; }
.zoom { position: absolute; left: 13px; top: 12px; width: 41px; height: 79px; border: 2px solid rgba(0,0,0,.25); background-clip: padding-box; border-radius: 5px; overflow: hidden; display: flex; flex-direction: column; }
.zoom button { flex: 1; display: flex; align-items: center; justify-content: center; border: 0; background: #fff; }
.zoom svg { fill: none; stroke: #000; stroke-width: 2.2px; margin-left: 2px; }
.zoom button + button { border-top: 1px solid #ccc; }
.popup { position: absolute; left: 356px; top: 5px; width: 432px; height: 219px; padding: 21px 25px; background: #fff; border-radius: 14px; box-shadow: 0 3px 14px rgba(0,0,0,.4); }
.popup::after { content: ""; position: absolute; left: 203px; top: 218px; width: 26px; height: 14px; background: #fff; clip-path: polygon(0 0, 100% 0, 50% 100%); }
.popup b { display: block; font-size: 20px; line-height: 24px; margin-top: -1px; }
.popup p { font-size: 18px; line-height: 25.200px; margin-top: 6.500px; white-space: nowrap; }
.close { position: absolute; right: 7px; top: 4px; font-size: 23px; line-height: 24px; color: #757575; }
.attribution { position: absolute; right: 0; bottom: 0; height: 21px; padding: 0 7px 0 6px; display: flex; align-items: center; gap: 4px; background: rgba(255,255,255,.8); font-size: 15px; color: #333; white-space: nowrap; }
.attribution a { color: #0078a8; }
.reports { padding: 15px 20px 0; }
.symbols { position: absolute; }
.card { width: 855px; border: 1px solid #dcdcdc; border-radius: 18px; box-shadow: 0 3px 10px rgba(0,0,0,.06); padding: 22px 22px 29px; margin-bottom: 22px; background: #fff; }
.card header { display: flex; justify-content: space-between; height: 37px; }
.card h3 { font-size: 22px; line-height: 36px; color: #222; }
.badge { height: 36px; padding: 0 15px; border-radius: 16px; font-size: 17px; line-height: 34px; }
.pending { color: #721c24; background: #f8d7da; }
.progress { color: #856404; background: #fff3cd; }
.time { font-size: 16px; line-height: 31px; height: 31px; color: #777; }
.row { display: flex; align-items: center; height: 32px; font-size: 18px; color: #444; }
.row.place { height: 31px; color: #555; }
.row svg { width: 20px; height: 20px; margin: 0 8px 0 2px; }
.card p { font-size: 19px; line-height: 28.500px; color: #333; white-space: nowrap; padding-top: 2px; }
```
